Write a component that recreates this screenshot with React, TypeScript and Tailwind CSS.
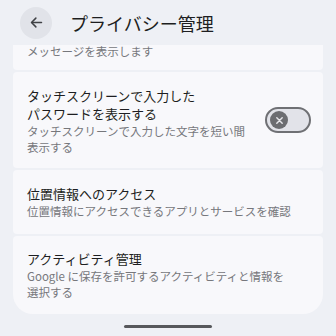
import React from 'react';

const font = { fontFamily: '"Noto Sans CJK JP", "Noto Sans", sans-serif' };

function BackArrow() {
  return (
    <svg width="15" height="15" viewBox="0 0 24 24" fill="none" stroke="#3f4145" strokeWidth="2.4" strokeLinecap="round" strokeLinejoin="round">
      <path d="M20 12H5" />
      <path d="M11 5l-7 7 7 7" />
    </svg>
  );
}

function Toggle() {
  return (
    <div className="flex h-[26px] w-[46px] shrink-0 items-center rounded-full border-2 border-[#6f7074] bg-[#e2e3e9] pl-[3px]">
      <div className="flex h-[18px] w-[18px] items-center justify-center rounded-full bg-[#6c6d71]">
        <svg width="9" height="9" viewBox="0 0 10 10" stroke="#e6e6ea" strokeWidth="1.6" strokeLinecap="round">
          <path d="M2 2l6 6M8 2l-6 6" />
        </svg>
      </div>
    </div>
  );
}

export default function App() {
  return (
    <div className="flex h-[336px] w-[336px] flex-col overflow-hidden bg-[#eef0f5]" style={font}>
      <div className="flex h-[45px] shrink-0 items-center pl-[20px]">
        <div className="flex h-[32px] w-[32px] items-center justify-center rounded-full bg-[#e1e3e9]">
          <BackArrow />
        </div>
        <div className="ml-[18px] text-[18px] leading-[24px] text-[#1d1e21]">プライバシー管理</div>
      </div>

      <div className="flex flex-col gap-[2px] px-[13px]">
        <div className="h-[25px] overflow-hidden rounded-b-[4px] bg-[#f8f8fb] px-[14px]">
          <div className="text-[11.5px] leading-[12px] text-[#76777c]">メッセージを表示します</div>
        </div>

        <div className="flex h-[96px] items-center rounded-[4px] bg-[#f8f8fb] pl-[14px] pr-[12px]">
          <div className="flex-1 pt-[2px]">
            <div className="text-[13px] leading-[18px] text-[#1d1e21]">
              タッチスクリーンで入力した
              <br />
              パスワードを表示する
            </div>
            <div className="text-[11.5px] leading-[16px] text-[#76777c]">
              タッチスクリーンで入力した文字を短い間
              <br />
              表示する
            </div>
          </div>
          <Toggle />
        </div>

        <div className="h-[64px] rounded-[4px] bg-[#f8f8fb] px-[14px] pt-[15px]">
          <div className="text-[13px] leading-[18px] text-[#1d1e21]">位置情報へのアクセス</div>
          <div className="text-[11.5px] leading-[16px] text-[#76777c]">位置情報にアクセスできるアプリとサービスを確認</div>
        </div>

        <div className="h-[78px] rounded-t-[4px] rounded-b-[20px] bg-[#f8f8fb] px-[14px] pt-[14px]">
          <div className="text-[13px] leading-[18px] text-[#1d1e21]">アクティビティ管理</div>
          <div className="text-[11.5px] leading-[16px] text-[#76777c]">
            Google に保存を許可するアクティビティと情報を
            <br />
            選択する
          </div>
        </div>
      </div>

      <div className="mt-[11px] flex justify-center">
        <div className="h-[3px] w-[88px] rounded-full bg-[#57585c]" />
      </div>
    </div>
  );
}
